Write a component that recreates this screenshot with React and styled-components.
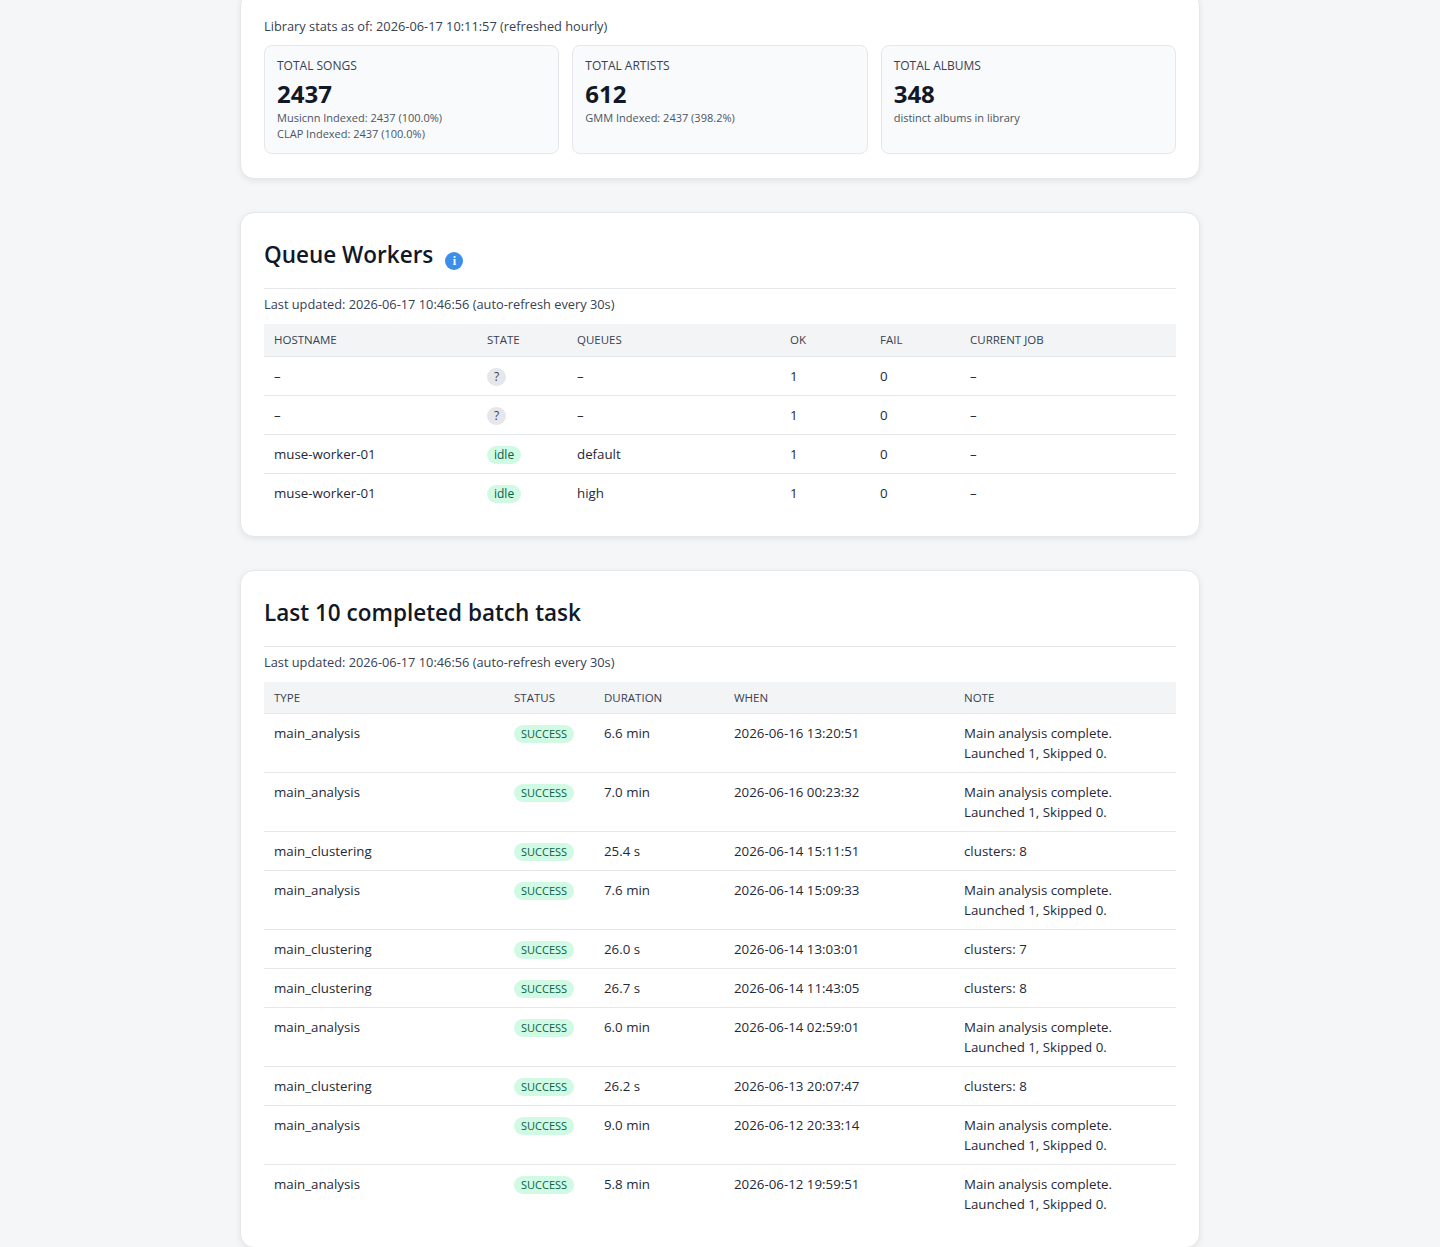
import React from 'react'
import styled, {createGlobalStyle} from 'styled-components'

const Global = createGlobalStyle`
  *, *::before, *::after { box-sizing: border-box; }
  body {
    margin: 0;
    background: #f5f6f8;
    font-family: "Open Sans", "Noto Sans", sans-serif;
    color: #111827;
  }
`

const Page = styled.div`
  width: 960px;
  margin: -8px auto 0;
  display: flex;
  flex-direction: column;
  gap: 33px;
  padding-bottom: 24px;
`

const Card = styled.section`
  background: #fff;
  border: 1px solid #e5e7eb;
  border-radius: 14px;
  box-shadow: 0 2px 6px rgba(0, 0, 0, 0.08);
  padding: 24px 23px;
`

const Muted = styled.div`
  font-size: 12.8px;
  color: #374151;
  line-height: 18px;
`

const StatGrid = styled.div`
  display: grid;
  grid-template-columns: repeat(3, 1fr);
  gap: 13px;
  margin-top: 10px;
`

const Stat = styled.div`
  background: #f9fafb;
  border: 1px solid #e5e7eb;
  border-radius: 8px;
  padding: 11px 12px;
  height: 109px;
`

const StatLabel = styled.div`
  font-size: 12px;
  text-transform: uppercase;
  color: #374151;
  line-height: 18px;
`

const StatValue = styled.div`
  font-size: 24px;
  font-weight: 700;
  line-height: 32px;
  margin-top: 3px;
`

const StatSub = styled.div`
  font-size: 11px;
  color: #4b5563;
  line-height: 16px;
`

const Title = styled.h2`
  margin: 0;
  font-size: 22.5px;
  font-weight: 600;
  display: flex;
  align-items: flex-end;
  gap: 12px;
  padding: 2px 0 17px;
  border-bottom: 1px solid #e5e7eb;
  line-height: 32px;
`

const Info = styled.span`
  width: 18px;
  height: 18px;
  border-radius: 50%;
  background: #3b8fe8;
  color: #fff;
  font: bold 12px "Liberation Serif", serif;
  display: inline-flex;
  align-items: center;
  justify-content: center;
  margin-bottom: 1px;
`

const Updated = styled(Muted)`
  margin: 6px 0 11px;
`

const Table = styled.table`
  width: 100%;
  border-collapse: collapse;
  font-size: 13.3px;
  table-layout: fixed;
`

const Th = styled.th`
  background: #f3f4f6;
  text-align: left;
  font-weight: 400;
  font-size: 11.5px;
  text-transform: uppercase;
  color: #374151;
  padding: 6px 10px;
  height: 32px;
  border-bottom: 1px solid #e5e7eb;
  width: ${(p) => p.$w || 'auto'};
`

const Td = styled.td`
  padding: 9px 10px;
  line-height: 20px;
  vertical-align: top;
  color: #1f2937;
  border-bottom: ${(p) => (p.$last ? 'none' : '1px solid #e5e7eb')};
`

const Pill = styled.span`
  display: inline-block;
  font-size: ${(p) => (p.$small ? '11px' : '12px')};
  line-height: 18px;
  padding: 0 7px;
  border-radius: 9px;
  background: ${(p) => (p.$ok ? '#d1fae5' : '#e5e7eb')};
  color: ${(p) => (p.$ok ? '#065f46' : '#374151')};
`

const Note = styled.span`
  white-space: pre-line;
`

const workers = [
  ['–', '?', '–'],
  ['–', '?', '–'],
  ['muse-worker-01', 'idle', 'default'],
  ['muse-worker-01', 'idle', 'high'],
]

const note = 'Main analysis complete.\nLaunched 1, Skipped 0.'
const tasks = [
  ['main_analysis', '6.6 min', '2026-06-16 13:20:51', note],
  ['main_analysis', '7.0 min', '2026-06-16 00:23:32', note],
  ['main_clustering', '25.4 s', '2026-06-14 15:11:51', 'clusters: 8'],
  ['main_analysis', '7.6 min', '2026-06-14 15:09:33', note],
  ['main_clustering', '26.0 s', '2026-06-14 13:03:01', 'clusters: 7'],
  ['main_clustering', '26.7 s', '2026-06-14 11:43:05', 'clusters: 8'],
  ['main_analysis', '6.0 min', '2026-06-14 02:59:01', note],
  ['main_clustering', '26.2 s', '2026-06-13 20:07:47', 'clusters: 8'],
  ['main_analysis', '9.0 min', '2026-06-12 20:33:14', note],
  ['main_analysis', '5.8 min', '2026-06-12 19:59:51', note],
]

export default function App() {
  return (
    <>
      <Global />
      <Page>
        <Card>
          <Muted>Library stats as of: 2026-06-17 10:11:57 (refreshed hourly)</Muted>
          <StatGrid>
            <Stat>
              <StatLabel>Total Songs</StatLabel>
              <StatValue>2437</StatValue>
              <StatSub>Musicnn Indexed: 2437 (100.0%)</StatSub>
              <StatSub>CLAP Indexed: 2437 (100.0%)</StatSub>
            </Stat>
            <Stat>
              <StatLabel>Total Artists</StatLabel>
              <StatValue>612</StatValue>
              <StatSub>GMM Indexed: 2437 (398.2%)</StatSub>
            </Stat>
            <Stat>
              <StatLabel>Total Albums</StatLabel>
              <StatValue>348</StatValue>
              <StatSub>distinct albums in library</StatSub>
            </Stat>
          </StatGrid>
        </Card>

        <Card>
          <Title>
            Queue Workers <Info>i</Info>
          </Title>
          <Updated>Last updated: 2026-06-17 10:46:56 (auto-refresh every 30s)</Updated>
          <Table>
            <thead>
              <tr>
                <Th $w="213px">Hostname</Th>
                <Th $w="90px">State</Th>
                <Th $w="213px">Queues</Th>
                <Th $w="90px">OK</Th>
                <Th $w="90px">Fail</Th>
                <Th>Current Job</Th>
              </tr>
            </thead>
            <tbody>
              {workers.map(([h, s, q], i) => {
                const last = i === workers.length - 1
                return (
                  <tr key={i}>
                    <Td $last={last}>{h}</Td>
                    <Td $last={last}>
                      <Pill $ok={s === 'idle'}>{s}</Pill>
                    </Td>
                    <Td $last={last}>{q}</Td>
                    <Td $last={last}>1</Td>
                    <Td $last={last}>0</Td>
                    <Td $last={last}>–</Td>
                  </tr>
                )
              })}
            </tbody>
          </Table>
        </Card>

        <Card>
          <Title>Last 10 completed batch task</Title>
          <Updated>Last updated: 2026-06-17 10:46:56 (auto-refresh every 30s)</Updated>
          <Table>
            <thead>
              <tr>
                <Th $w="240px">Type</Th>
                <Th $w="90px">Status</Th>
                <Th $w="130px">Duration</Th>
                <Th $w="230px">When</Th>
                <Th>Note</Th>
              </tr>
            </thead>
            <tbody>
              {tasks.map(([t, d, w, n], i) => {
                const last = i === tasks.length - 1
                return (
                  <tr key={i}>
                    <Td $last={last}>{t}</Td>
                    <Td $last={last}>
                      <Pill $ok $small>SUCCESS</Pill>
                    </Td>
                    <Td $last={last}>{d}</Td>
                    <Td $last={last}>{w}</Td>
                    <Td $last={last}>
                      <Note>{n}</Note>
                    </Td>
                  </tr>
                )
              })}
            </tbody>
          </Table>
        </Card>
      </Page>
    </>
  )
}
